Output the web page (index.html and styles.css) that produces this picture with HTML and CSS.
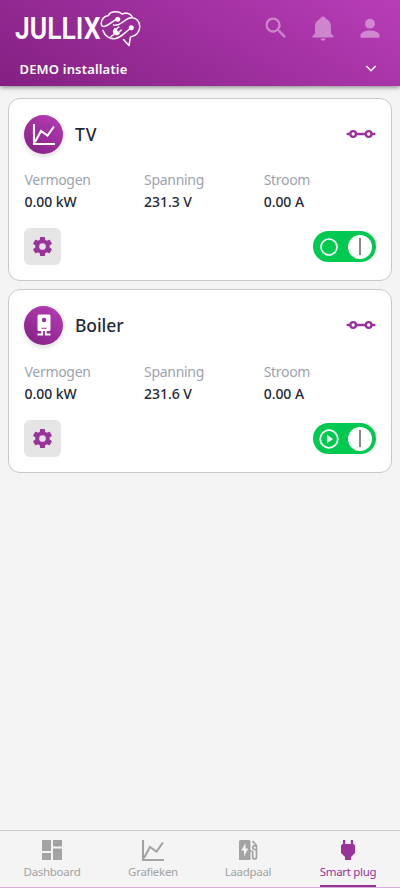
FILE: index.html
```html
<!DOCTYPE html>
<html lang="nl">
<head>
<meta charset="utf-8">
<meta name="viewport" content="width=device-width, initial-scale=1">
<title>Jullix</title>
<link rel="stylesheet" href="styles.css">
</head>
<body>
<svg class="defs" width="0" height="0">
  <symbol id="chart" viewBox="0 0 24 24"><path d="M2 2v20h21" fill="none" stroke="currentColor" stroke-width="2.1"/><path d="M3 20 9 9l6.500 4.500L22 4.500" fill="none" stroke="currentColor" stroke-width="2.100"/></symbol>
  <symbol id="gear" viewBox="0 0 24 24"><path fill="currentColor" d="M12 15.500A3.500 3.500 0 0 1 8.500 12 3.500 3.500 0 0 1 12 8.500a3.500 3.500 0 0 1 3.500 3.500 3.500 3.500 0 0 1-3.500 3.500m7.430-2.530c.04-.32.070-.64.070-.97s-.03-.66-.07-1l2.110-1.630c.19-.15.240-.42.120-.64l-2-3.460c-.12-.22-.39-.31-.61-.22l-2.490 1c-.52-.39-1.060-.73-1.690-.98l-.37-2.650A.506.506 0 0 0 14 2h-4c-.25 0-.46.180-.5.420l-.37 2.650c-.63.250-1.170.590-1.690.980l-2.490-1c-.22-.09-.49 0-.61.220l-2 3.460c-.13.220-.07.490.12.640L4.570 11c-.04.340-.07.670-.07 1s.03.650.070.970l-2.110 1.660c-.19.150-.25.420-.12.640l2 3.460c.12.220.39.300.610.220l2.490-1.010c.52.400 1.060.740 1.690.990l.37 2.650c.04.240.250.420.500.420h4c.25 0 .46-.18.500-.42l.37-2.650c.63-.26 1.170-.59 1.690-.99l2.490 1.010c.22.080.49 0 .61-.22l2-3.460c.12-.22.070-.49-.12-.64z"/></symbol>
  <symbol id="link" viewBox="0 0 30 10"><path d="M1.700 5h2M10 5h9.500M25.500 5h2.800" fill="none" stroke="currentColor" stroke-width="2.500" stroke-linecap="round"/><g fill="none" stroke="currentColor" stroke-width="2.300"><circle cx="7.200" cy="5" r="2.800"/><circle cx="22.700" cy="5" r="2.800"/></g></symbol>
</svg>
<header class="header">
  <div class="bar">
    <svg class="logo" width="128" height="40" viewBox="0 0 128 40">
      <text class="wordmark" x="0" y="29.500" textLength="85.500" lengthAdjust="spacingAndGlyphs">JULLIX</text>
      <g fill="none" stroke="#fff" stroke-width="1.500" stroke-linecap="round" stroke-linejoin="round">
        <path d="M117 7.300C115 4 110 3.500 107 5c-4-3.800-12-2.500-13.500 1.500-4.500.5-7.300 4-7.300 8 0 2.500 1.800 3.500 4.500 2.500 4-1.500 7-5.500 12-6.700"/>
        <path d="M88 21.500c1.500 5.500 7 9 12.500 8 6-1 8.500-5.500 15.500-10.500"/>
        <path d="M98.500 16c7.500 2 10.500-6.800 18-7.200 4.800-.2 8.500 4 8.300 9-.3 5-3.800 9.200-9.300 10.200l-1.500 8.500-5.500-6"/>
        <path d="m98.500 25.800-2.500 1.700M101.500 20l2.300-2M104 23l2.300-1.800"/>
      </g>
      <g fill="#fff"><circle cx="102.700" cy="10.300" r="2.500"/><circle cx="116.300" cy="18.800" r="2.500"/><path d="m100 18.500 5 6c-2 2.300-4.500 2.500-6.200.8s-1.200-4.800 1.200-6.800z"/></g>
    </svg>
    <nav class="actions">
      <svg width="28" height="28" viewBox="0 0 24 24"><path fill="currentColor" d="M9.500 3A6.500 6.500 0 0 1 16 9.500c0 1.610-.59 3.090-1.560 4.230l.27.270h.79l5 5-1.500 1.500-5-5v-.79l-.27-.27A6.500 6.500 0 1 1 9.500 3m0 2a4.500 4.500 0 1 0 0 9 4.500 4.500 0 0 0 0-9z"/></svg>
      <svg width="24" height="28" viewBox="0 0 24 28"><path fill="currentColor" d="M12 2.500c-1.600 0-2.600 1-2.600 2.200C5.800 6 4 9 4 12.500v7L1.500 22v1.500h21V22L20 19.500v-7c0-3.500-1.800-6.500-5.400-7.800 0-1.200-1-2.200-2.600-2.200zM9.500 24.500a2.500 2.200 0 0 0 5 0z"/></svg>
      <svg width="28" height="28" viewBox="0 0 28 28"><circle cx="14" cy="9.700" r="4.900" fill="currentColor"/><path fill="currentColor" d="M4.500 23.800V21.300c0-3 5-4.800 9.500-4.800s9.500 1.800 9.500 4.800v2.500z"/></svg>
    </nav>
  </div>
  <div class="site"><span>DEMO installatie</span>
    <svg width="12" height="8" viewBox="0 0 12 8"><path d="m1.300 1 4.700 4.700 4.700-4.700" fill="none" stroke="#fff" stroke-width="1.500"/></svg>
  </div>
</header>
<main class="devices">
  <article class="card">
    <div class="head"><span class="avatar"><svg width="24" height="24"><use href="#chart"/></svg></span><h2 class="short">TV</h2><svg class="link" width="30" height="10"><use href="#link"/></svg></div>
    <dl class="stats">
      <div><dt>Vermogen</dt><dd>0.00 kW</dd></div>
      <div><dt>Spanning</dt><dd>231.3 V</dd></div>
      <div><dt>Stroom</dt><dd>0.00 A</dd></div>
    </dl>
    <div class="controls"><button class="settings" aria-label="Instellingen"><svg width="23" height="23"><use href="#gear"/></svg></button>
      <span class="toggle"><svg width="20" height="20" viewBox="0 0 20 20"><circle cx="10" cy="10" r="8" fill="none" stroke="#fff" stroke-width="1.700"/></svg><i class="knob"></i></span></div>
  </article>
  <article class="card boiler">
    <div class="head"><span class="avatar"><svg width="24" height="24" viewBox="0 0 24 24"><path fill="#fff" fill-rule="evenodd" d="M7 1.500h10q1.500 0 1.500 1.500v13.500q0 1.500-1.500 1.500H7q-1.500 0-1.500-1.500V3Q5.500 1.500 7 1.500zM12 4.700a2.300 2.300 0 1 0 0 4.600 2.300 2.300 0 0 0 0-4.600zM9.500 14.800v1h5v-1z"/><path d="M5.500 21.500h4.700V18M18.500 21.500h-4.700V18" fill="none" stroke="#fff" stroke-width="1.800"/></svg></span><h2>Boiler</h2><svg class="link" width="30" height="10"><use href="#link"/></svg></div>
    <dl class="stats">
      <div><dt>Vermogen</dt><dd>0.00 kW</dd></div>
      <div><dt>Spanning</dt><dd>231.6 V</dd></div>
      <div><dt>Stroom</dt><dd>0.00 A</dd></div>
    </dl>
    <div class="controls"><button class="settings" aria-label="Instellingen"><svg width="23" height="23"><use href="#gear"/></svg></button>
      <span class="toggle"><svg width="20" height="20" viewBox="0 0 20 20"><circle cx="10" cy="10" r="8.800" fill="none" stroke="#fff" stroke-width="1.800"/><path d="m8 5.800 6 4.200-6 4.200z" fill="#fff"/></svg><i class="knob"></i></span></div>
  </article>
</main>
<nav class="tabs">
  <a class="tab"><svg width="24" height="24" viewBox="0 0 24 24"><path fill="currentColor" d="M2 2h9v11H2zM13 2h9v6.500h-9zM2 15h9v7H2zM13 10.500h9V22h-9z"/></svg><span>Dashboard</span></a>
  <a class="tab"><svg width="24" height="24"><use href="#chart"/></svg><span>Grafieken</span></a>
  <a class="tab"><svg width="24" height="24" viewBox="0 0 24 24"><path fill="currentColor" fill-rule="evenodd" d="M4.500 2h8.500Q14.500 2 14.500 3.500V22H3V3.500Q3 2 4.500 2zM9.500 5l-4.200 7.500H8V18.500l4.200-8H9.500z"/><path d="M14 13h1.500q1.200 0 1.200 1v5q0 2 1.900 2t1.900-2V7.500L16.500 3M20.500 8q-3.800-1-3.800 1.500 0 2.500 3.800 2" fill="none" stroke="currentColor" stroke-width="1.700"/></svg><span>Laadpaal</span></a>
  <a class="tab active"><svg width="24" height="24" viewBox="0 0 24 24"><path fill="currentColor" d="M7 2h2.200v4h5.600V2H17v4h.5L19 7.500V15l-4 4v3H9v-3l-4-4V7.500L6.500 6H7z"/></svg><span>Smart plug</span></a>
</nav>
</body>
</html>
```

FILE: styles.css
```css
* { box-sizing: border-box; }
body { margin: 0; height: 888px; display: flex; flex-direction: column; background: #f4f4f4; color: #1f2937; font-family: "Noto Sans", "Open Sans", sans-serif; overflow: hidden; }
svg { display: block; flex: none; }
.defs { position: absolute; }
.header { height: 86px; flex: none; background: linear-gradient(30deg, #832082, #b83db8); color: #fff; box-shadow: 0 1px 5px rgba(0,0,0,.5); }
.bar { height: 56px; display: flex; justify-content: space-between; padding: 9px 16px 0 15px; }
.wordmark { fill: #fff; font: 600 31.500px Roboto, sans-serif; }
.actions { display: flex; gap: 21px; padding-top: 5px; color: rgba(255,255,255,.4); }
.site { display: flex; justify-content: space-between; align-items: center; height: 26px; padding: 0 23px 0 19.500px; font-size: 13px; font-weight: 600; letter-spacing: .17px; }
.devices { flex: 1; display: flex; flex-direction: column; gap: 8px; padding: 12px 8px; }
.card { height: 183px; background: #fff; border: 1px solid #c8c8c8; border-radius: 12px; padding: 15px; }
.boiler { height: 184px; }
.head { display: flex; align-items: center; height: 40px; }
.avatar { width: 39px; height: 39px; display: grid; place-items: center; border-radius: 50%; color: #fff; background: linear-gradient(30deg, #832082, #b83db8); box-shadow: 0 3px 5px rgba(0,0,0,.12); }
h2 { margin: 0 auto 0 12px; font-size: 17.500px; font-weight: 500; line-height: 24px; letter-spacing: -.1px; }
.short { letter-spacing: 1px; }
.link { color: #993299; margin-right: .5px; }
.stats { display: grid; grid-template-columns: repeat(3, 119.6px); margin: 15px 0 0; padding-left: .5px; }
.boiler .stats { margin-top: 16px; }
dt { font-size: 14px; line-height: 22px; color: #9ca3af; letter-spacing: -.3px; }
dd { margin: 0; font-size: 14px; line-height: 22px; font-weight: 500; letter-spacing: -.05px; }
.controls { display: flex; justify-content: space-between; align-items: center; margin-top: 15px; }
.boiler .controls { margin-top: 15px; }
.settings { width: 37px; height: 37px; padding: 0; border: 0; border-radius: 6px; display: grid; place-items: center; background: #e5e5e5; color: #993299; }
.toggle { width: 62.500px; height: 31px; display: flex; align-items: center; justify-content: space-between; padding: 0 3.500px 0 5.500px; margin-right: .5px; border-radius: 16px; background: #00c950; }
.knob { width: 24px; height: 24px; border-radius: 50%; background: linear-gradient(#888, #888) center / 2px 17px no-repeat #fff; }
.tabs { height: 58px; flex: none; display: grid; grid-template-columns: 104px 98px 92px 106px; justify-items: center; border-top: 1px solid #ccc; border-bottom: 1px solid #d5b0d6; background: #f4f4f4; }
.tab { display: flex; flex-direction: column; align-items: center; padding-top: 7px; color: #a3a3a3; border-bottom: 2px solid transparent; }
.tab span { font-size: 11.500px; line-height: 20px; letter-spacing: -.3px; }
.tab.active { color: #993299; border-color: #993299; position: relative; left: 1px; }
```
